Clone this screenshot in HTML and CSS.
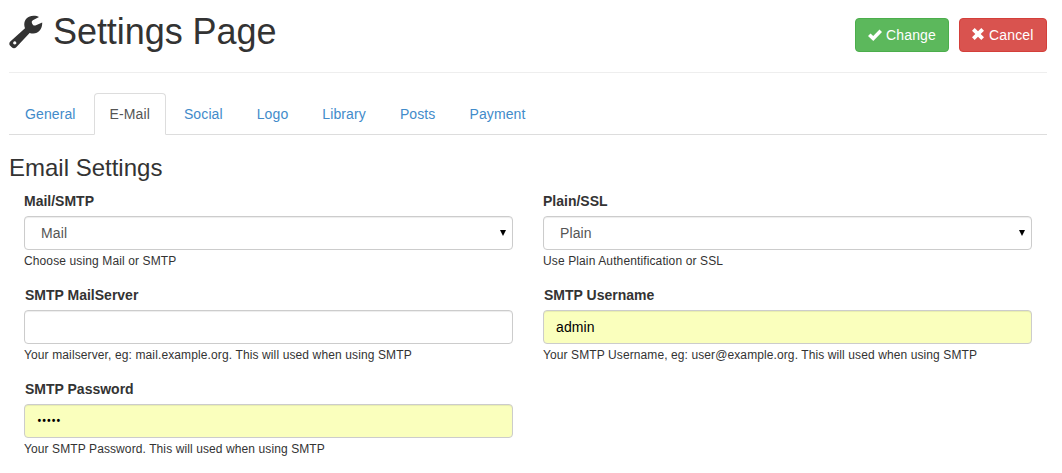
FILE: index.html
```html
<!DOCTYPE html>
<html lang="en">
<head>
<meta charset="utf-8">
<title>Settings Page</title>
<link rel="stylesheet" href="styles.css">
</head>
<body>
<header class="page-header">
  <h1 class="page-title">
    <svg class="wrench" viewBox="0 0 34 34"><path fill-rule="evenodd" d="M1.300 26.500 16 13.300C13.500 7 17.500.8 24.500.8c2.300 0 4.300.4 5.500 1.200L24.300 4.900C22.600 5.800 22.400 7.200 23.200 8.700C24 10.300 25.400 11 27 10.300L33.200 7.500C33.600 15 28 20.500 20.600 17.900L7.500 32Q5 34.500 2.500 32L1 30.500Q-.5 28.500 1.300 26.500ZM5.700 26.300a1.600 1.600 0 1 0 .1 0Z"/></svg>
    <span>Settings Page</span>
  </h1>
  <div class="actions">
    <button class="btn success"><svg class="check" viewBox="0 0 14 12"><path d="M0 7 2.500 4.500 5.200 7 11.500.5 14 3 5.300 12Z"/></svg><span>Change</span></button>
    <button class="btn danger"><svg class="cross" viewBox="0 0 12 12"><path d="M2.700 0 6 3.300 9.300 0 12 2.700 8.700 6 12 9.300 9.300 12 6 8.700 2.700 12 0 9.300 3.300 6 0 2.700Z"/></svg><span>Cancel</span></button>
  </div>
</header>
<nav class="tabs">
  <a class="tab">General</a><a class="tab active">E-Mail</a><a class="tab">Social</a><a class="tab">Logo</a><a class="tab">Library</a><a class="tab">Posts</a><a class="tab">Payment</a>
</nav>
<h2 class="section-title">Email Settings</h2>
<main class="fields">
  <div class="field"><label>Mail/SMTP</label><div class="control select"><span>Mail</span><i class="arrow"></i></div><p>Choose using Mail or SMTP</p></div>
  <div class="field"><label>Plain/SSL</label><div class="control select"><span>Plain</span><i class="arrow"></i></div><p>Use Plain Authentification or SSL</p></div>
  <div class="field"><label class="inset">SMTP MailServer</label><input class="control" type="text"><p>Your mailserver, eg: mail.example.org. This will used when using SMTP</p></div>
  <div class="field"><label class="inset">SMTP Username</label><input class="control filled" type="text" value="admin"><p class="tight">Your SMTP Username, eg: user@example.org. This will used when using SMTP</p></div>
  <div class="field"><label class="inset">SMTP Password</label><input class="control filled password" type="password" value="admin"><p class="tight">Your SMTP Password. This will used when using SMTP</p></div>
</main>
</body>
</html>
```
FILE: styles.css
```css
* { box-sizing: border-box; }
body { margin: 0; padding: 0 15px 0 9px; height: 473px; overflow: hidden; background: #fff; color: #333; font: 14px/20px "Liberation Sans", Arial, sans-serif; }
.page-header { height: 73px; border-bottom: 1px solid #eee; display: flex; justify-content: space-between; align-items: flex-start; }
.page-title { margin: 12px 0 0; display: flex; align-items: flex-start; gap: 10px; font-size: 36px; font-weight: 400; line-height: 40px; letter-spacing: -.06px; }
.wrench { width: 34px; height: 34px; margin-top: 3px; fill: #333; }
.actions { display: flex; gap: 10px; padding-top: 18px; }
.btn { height: 34px; padding: 0 12px; border: 1px solid; border-radius: 4px; color: #fff; font: inherit; letter-spacing: .15px; display: flex; align-items: center; gap: 4px; white-space: nowrap; }
.btn svg { fill: #fff; flex: none; }
.check { width: 14px; height: 12px; }
.cross { width: 12px; height: 12px; margin: -2px 1px 0 0; }
.success { width: 94px; background: #5cb85c; border-color: #4cae4c; }
.danger { width: 88px; background: #d9534f; border-color: #d43f3a; }
.tabs { display: flex; gap: 2px; height: 42px; margin-top: 20px; border-bottom: 1px solid #ddd; letter-spacing: .11px; }
.tab { height: 42px; padding: 10px 15px; border: 1px solid transparent; border-radius: 4px 4px 0 0; color: #428bca; }
.active { color: #555; background: #fff; border-color: #ddd #ddd #fff; }
.section-title { margin: 20px 0 10px; font-size: 24px; line-height: 26px; font-weight: 400; }
.fields { padding: 0 15px; display: grid; grid-template-columns: 489px 489px; column-gap: 30px; grid-auto-rows: 94px; }
.field label { display: block; height: 20px; margin-bottom: 5px; font-weight: 700; }
.field .inset { padding-left: 1px; }
.control { display: block; width: 100%; height: 34px; padding: 6px 12px; border: 1px solid #ccc; border-radius: 4px; background: #fff; color: #000; font: inherit; letter-spacing: .12px; box-shadow: inset 0 1px 1px rgba(0,0,0,.075); }
.filled { background: #faffbd; }
.password { font-family: Roboto, sans-serif; letter-spacing: 0; }
.select { display: flex; justify-content: space-between; align-items: center; padding: 0 6px 0 16px; color: #555; }
.arrow { border: 3.500px solid transparent; border-top: 6px solid #000; border-bottom: 0; }
.field p { margin: 2px 0 0; font-size: 12px; line-height: 18px; letter-spacing: .12px; }
.field .tight { letter-spacing: .1px; }
```
